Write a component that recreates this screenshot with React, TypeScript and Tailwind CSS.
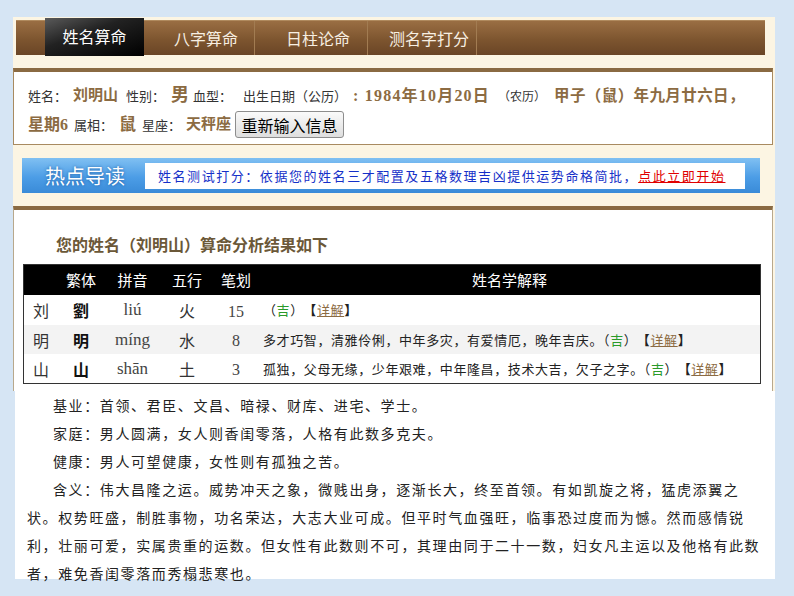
const tabs = ['八字算命', '日柱论命', '测名字打分'];

const rows = [
  { s: '刘', t: '劉', py: 'liú', wx: '火', bh: '15', desc: '', bg: 'bg-white', h: 'h-[30px]' },
  { s: '明', t: '明', py: 'míng', wx: '水', bh: '8', desc: '多才巧智，清雅伶俐，中年多灾，有爱情厄，晚年吉庆。', bg: 'bg-[#f3f3f3]', h: 'h-[29px]' },
  { s: '山', t: '山', py: 'shān', wx: '土', bh: '3', desc: '孤独，父母无缘，少年艰难，中年隆昌，技术大吉，欠子之字。', bg: 'bg-white', h: 'h-[29px]' },
];

function Value({ children, size = 'text-[15px]' }: { children: React.ReactNode; size?: string }) {
  return (
    <span className={`font-['Liberation_Serif','Noto_Sans_CJK_SC',serif] font-bold text-[#8c6b42] ${size}`}>
      {children}
    </span>
  );
}

export default function App() {
  return (
    <div className="min-h-[596px] w-[794px] bg-[#d6e5f4] pt-[17px] font-['Noto_Sans_CJK_SC',sans-serif] text-[#333]">
      <div className="ml-[13px] w-[762px] bg-[#fcf5e3] pt-[3px]">
        {/* nav */}
        <div className="ml-[3px] flex h-[35px] w-[749px] border-t border-[#b08a5e] bg-[linear-gradient(#9a6e43,#7d552f_55%,#6a4526)] text-[16px] text-[#f7efe2]">
          <div className="ml-[29px] -mt-[3px] flex h-[38px] w-[99px] items-center justify-center bg-[linear-gradient(160deg,#5a5a5a_0%,#222_40%,#000_100%)] pb-[2px] text-white">
            姓名算命
          </div>
          {tabs.map((t, i) => (
            <div
              key={t}
              className={`flex items-center justify-center border-r border-[#a27c52] pl-[14px] ${i === 0 ? 'w-[111px]' : i === 1 ? 'w-[113px]' : 'w-[109px]'}`}
            >
              {t}
            </div>
          ))}
        </div>

        {/* info */}
        <div className="mt-[13px] h-[77px] w-[760px] border-x border-b border-t-[4px] border-[#a88a60] border-t-[#8a6a42] bg-white pl-[14px] pt-[9px] text-[13px]">
          <div className="flex h-[29px] items-center whitespace-nowrap">
            <span>姓名：</span>
            <span className="ml-[6px]"><Value>刘明山</Value></span>
            <span className="ml-[8px]">性别：</span>
            <span className="ml-[6px]"><Value size="text-[18px]">男</Value></span>
            <span className="ml-[4px]">血型：</span>
            <span className="ml-[11px]">出生日期（公历）</span>
            <span className="ml-[6px] tracking-[1.2px]"><Value size="text-[16px]">:&nbsp;1984年10月20日</Value></span>
            <span className="ml-[8px] text-[12px]">（农历）</span>
            <span className="ml-[8px] tracking-[0.4px]"><Value size="text-[15.5px]">甲子（鼠）年九月廿六日，</Value></span>
          </div>
          <div className="flex h-[29px] items-center whitespace-nowrap">
            <Value size="text-[16px]">星期6</Value>
            <span className="ml-[6px]">属相：</span>
            <span className="ml-[6px]"><Value size="text-[17px]">鼠</Value></span>
            <span className="ml-[6px]">星座：</span>
            <span className="ml-[5px]"><Value>天秤座</Value></span>
            <button className="ml-[4px] h-[27px] w-[109px] rounded-[3px] border border-[#8d8d8d] bg-[linear-gradient(#fafafa,#dedede)] text-[16px] text-black">
              重新输入信息
            </button>
          </div>
        </div>

        {/* hot read */}
        <div className="ml-[9px] mt-[13px] flex h-[35px] w-[738px] items-center bg-[linear-gradient(#80c0f2,#4c9de6_55%,#3a8bd8)]">
          <div className="w-[123px] pl-[23px] text-[20px] text-white [text-shadow:0_0_3px_#1f5fa6]">热点导读</div>
          <div className="flex h-[26px] w-[600px] items-center bg-white pl-[13px] text-[13px] tracking-[1.55px] text-[#1530c8]">
            姓名测试打分：依据您的姓名三才配置及五格数理吉凶提供运势命格简批，
            <span className="text-[#e00000] underline">点此立即开始</span>
          </div>
        </div>

        {/* result */}
        <div className="mt-[13px] w-[760px] border-x border-t-[4px] border-[#b8a88c] border-t-[#8a6a42] bg-white pb-[7px]">
          <div className="h-[54px] pl-[42px] pt-[24px] text-[16px] font-bold leading-[20px] text-[#6b5838]">
            您的姓名（刘明山）算命分析结果如下
          </div>
          <div className="ml-[9px] w-[738px] border border-[#333]">
            <div className="grid h-[30px] grid-cols-[34px_46px_57px_52px_46px_1fr] items-center bg-black text-center text-[15px] text-white">
              <div />
              <div>繁体</div>
              <div>拼音</div>
              <div>五行</div>
              <div>笔划</div>
              <div>姓名学解释</div>
            </div>
            {rows.map((r) => (
              <div key={r.s} className={`grid grid-cols-[34px_46px_57px_52px_46px_1fr] items-center text-center ${r.bg} ${r.h}`}>
                <div className="text-[16px]">{r.s}</div>
                <div className="text-[16px] font-bold text-[#111]">{r.t}</div>
                <div className="font-['Liberation_Serif',serif] text-[17px] text-[#444]">{r.py}</div>
                <div className="text-[16px]">{r.wx}</div>
                <div className="pt-[3px] font-['Liberation_Serif',serif] text-[16px] text-[#444]">{r.bh}</div>
                <div className="whitespace-nowrap pl-[4px] text-left text-[13px] tracking-[0.6px] text-[#222]">
                  {r.desc}（<span className="text-[#2a9a2a]">吉</span>）
                  <span className="ml-[6px] font-bold">【</span>
                  <span className="text-[#8c6b42] underline">详解</span>
                  <span className="font-bold">】</span>
                </div>
              </div>
            ))}
          </div>
        </div>
      </div>

      {/* body text */}
      <div className="ml-[15px] h-[188px] w-[760px] bg-white pl-[12px] text-[14px] leading-[28px] tracking-[1.6px] text-[#222] whitespace-nowrap">
        <p className="indent-[26px]">基业：首领、君臣、文昌、暗禄、财库、进宅、学士。</p>
        <p className="indent-[26px]">家庭：男人圆满，女人则香闺零落，人格有此数多克夫。</p>
        <p className="indent-[26px]">健康：男人可望健康，女性则有孤独之苦。</p>
        <p className="indent-[26px]">
          含义：伟大昌隆之运。威势冲天之象，微贱出身，逐渐长大，终至首领。有如凯旋之将，猛虎添翼之
        </p>
        <p>状。权势旺盛，制胜事物，功名荣达，大志大业可成。但平时气血强旺，临事恐过度而为憾。然而感情锐</p>
        <p>利，壮丽可爱，实属贵重的运数。但女性有此数则不可，其理由同于二十一数，妇女凡主运以及他格有此数</p>
        <p>者，难免香闺零落而秀榻悲寒也。</p>
      </div>
    </div>
  );
}
